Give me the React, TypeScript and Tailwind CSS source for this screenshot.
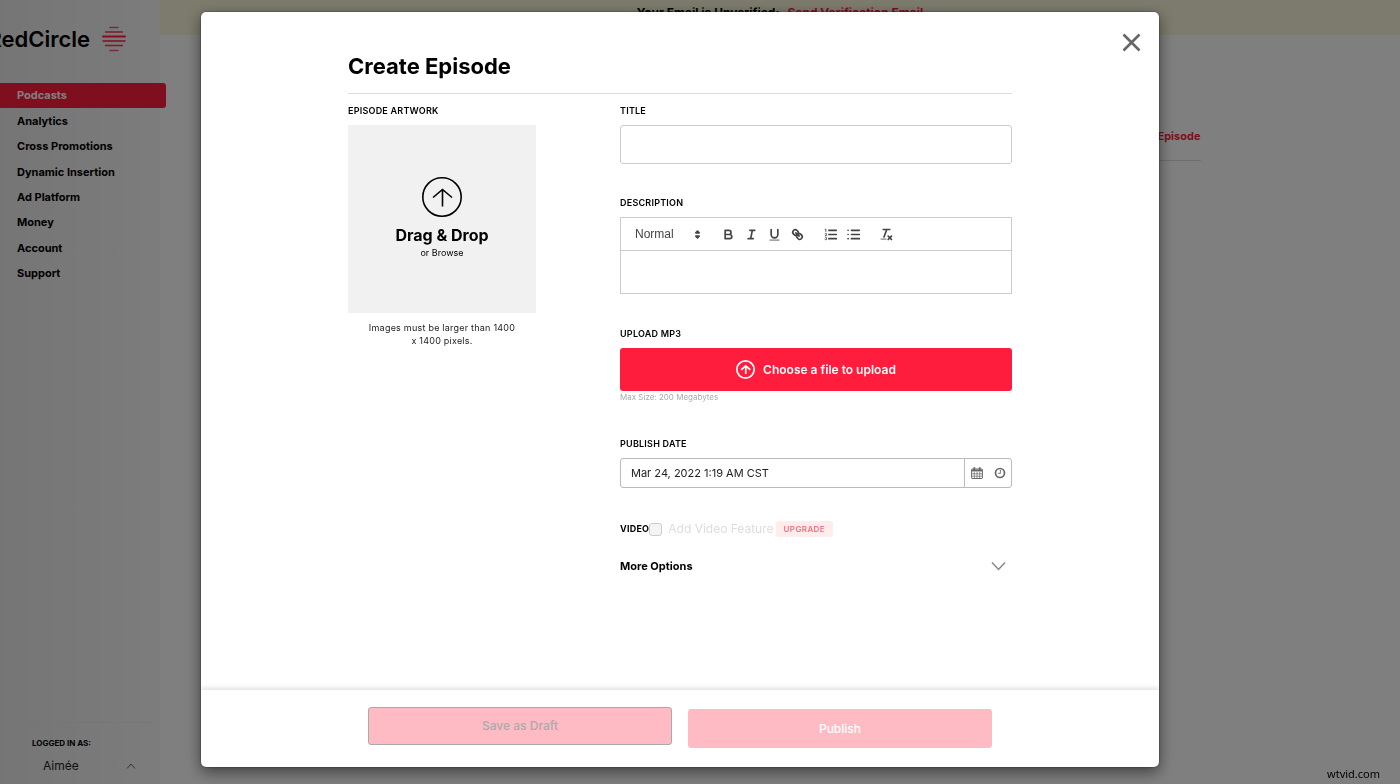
import React from "react";

const NAV_ITEMS = [
  "Podcasts",
  "Analytics",
  "Cross Promotions",
  "Dynamic Insertion",
  "Ad Platform",
  "Money",
  "Account",
  "Support",
];

function LogoMark() {
  return (
    <svg
      className="h-[26px] w-[26px] shrink-0"
      viewBox="0 0 26 26"
      fill="none"
      stroke="#fe1d3d"
      strokeLinecap="round"
    >
      <path d="M9 1.500h8M9 24.500h8" strokeWidth="1.600" opacity="0.750" />
      <path d="M4.500 6h17M4.500 19.500h17" strokeWidth="1.300" opacity="0.900" />
      <path d="M2 10.500h22" strokeWidth="2" />
      <path d="M2 15h22" strokeWidth="1.300" />
    </svg>
  );
}

function UploadCircle({ className, strokeWidth }: { className: string; strokeWidth: number }) {
  return (
    <svg className={className} viewBox="0 0 40 40" fill="none" stroke="currentColor" strokeWidth={strokeWidth}>
      <circle cx="20" cy="20" r={20 - strokeWidth / 2} />
      <path d="M20.500 29.500V12.500M11 20.500l9.500-8 9.500 8" />
    </svg>
  );
}

function ToolIcon({ label, children }: { label: string; children: React.ReactNode }) {
  return (
    <button type="button" aria-label={label} className="flex h-5 w-[23px] items-center justify-center text-[#444]">
      <svg
        className="h-[15px] w-[15px]"
        viewBox="0 0 18 18"
        fill="none"
        stroke="currentColor"
        strokeWidth="2"
        strokeLinecap="round"
        strokeLinejoin="round"
      >
        {children}
      </svg>
    </button>
  );
}

function Sidebar() {
  return (
    <aside className="flex w-40 shrink-0 flex-col bg-linear-to-r from-[#ebebeb] to-[#f9f9f9]">
      <div className="flex h-[83px] items-start justify-end gap-[11px] pt-[26px] pr-[33px]">
        <span className="text-[22px] leading-[26px] font-semibold">RedCircle</span>
        <LogoMark />
      </div>
      <nav className="-mr-1.5 grid h-[203px] auto-rows-fr">
        {NAV_ITEMS.map((item, i) => (
          <a
            key={item}
            href="#"
            className={
              i === 0
                ? "flex items-center rounded-r-[3px] bg-[#fe1d3d] pl-[17px] text-[11px] font-bold text-white"
                : "flex items-center pl-[17px] text-[11px] font-bold"
            }
          >
            {item}
          </a>
        ))}
      </nav>
      <div className="mt-auto px-2">
        <hr className="border-[#ececec]" />
        <div className="pt-3.5 pb-[5px] pl-6">
          <p className="text-[8px] leading-3 font-bold">LOGGED IN AS:</p>
          <button type="button" className="mt-1 flex h-[26px] w-[104px] items-center justify-between pl-[11px] text-xs text-[#222]">
            Aimée
            <svg className="h-2 w-2.5" viewBox="0 0 10 8" fill="none" stroke="#555" strokeWidth="0.900">
              <path d="M1 6.500l4-4.500 4 4.500" />
            </svg>
          </button>
        </div>
      </div>
    </aside>
  );
}

function Dashboard() {
  return (
    <div className="flex min-h-screen bg-white">
      <Sidebar />
      <main className="flex-1">
        <div className="flex h-[35px] items-start justify-center gap-2 bg-[#f9f7da] pt-[5px] text-xs font-bold">
          <span>Your Email is Unverified:</span>
          <a href="#" className="text-[#fe1d3d]">
            Send Verification Email
          </a>
        </div>
        <div className="mx-auto flex max-w-[841px] justify-end border-b border-[#ddd] pt-[93px] pb-4">
          <a href="#" className="text-[11px] leading-4 font-bold text-[#fe1d3d]">
            Episode
          </a>
        </div>
      </main>
    </div>
  );
}

const LABEL = "mb-[7px] block text-[9px] leading-[14px] font-semibold tracking-wide text-black uppercase";

function Editor() {
  return (
    <div className="border border-[#ccc]">
      <div className="flex h-[33px] items-center border-b border-[#ccc] pl-3.5">
        <div className="mr-3 flex w-[70px] items-center">
          <select
            aria-label="Text style"
            className="h-4 min-w-0 flex-1 appearance-none bg-transparent font-['Liberation_Sans',sans-serif] text-xs leading-4 font-medium text-[#444]"
          >
            <option>Normal</option>
          </select>
          <svg
            className="pointer-events-none h-[15px] w-[15px]"
            viewBox="0 0 18 18"
            fill="#444"
            stroke="#444"
            strokeWidth="2"
            strokeLinejoin="round"
          >
            <path d="M7 11l2 2 2-2zM7 7l2-2 2 2z" />
          </svg>
        </div>
        <div className="flex">
          <ToolIcon label="Bold">
            <path d="M5 4h4.500a2.500 2.500 0 0 1 0 5H5zM5 9h5.500a2.500 2.500 0 0 1 0 5H5z" />
          </ToolIcon>
          <ToolIcon label="Italic">
            <path d="M7 4h6M5 14h6M8 14l2-10" />
          </ToolIcon>
          <ToolIcon label="Underline">
            <path d="M5 3v6a4 4 0 0 0 8 0V3" />
            <path d="M3.500 15.700h11" strokeWidth="1" />
          </ToolIcon>
          <ToolIcon label="Link">
            <path d="M7 7l4 4" />
            <path d="M8.900 4.577a3.476 3.476 0 0 1 .36 4.679A3.476 3.476 0 0 1 4.577 8.900C3.185 7.500 2.035 6.400 4.217 4.217S7.500 3.185 8.900 4.577Z" />
            <path d="M13.423 9.100a3.476 3.476 0 0 0-4.679-.36 3.476 3.476 0 0 0 .36 4.679c1.392 1.392 2.500 2.542 4.679.36S14.815 10.500 13.423 9.100Z" />
          </ToolIcon>
        </div>
        <div className="ml-2.5 flex">
          <ToolIcon label="Numbered list">
            <path d="M7 4h9M7 9h9M7 14h9" />
            <path
              d="M2.500 2.900l1-.4v3M4.500 10.500h-2c0-.234 1.850-1.076 1.850-2.234a.959.959 0 0 0-1.850-.11M2.500 14.846a.959.959 0 0 0 1.850-.109.7.7 0 0 0-.6-.737.688.688 0 0 0 .6-.736.959.959 0 0 0-1.850-.109"
              strokeWidth="1"
            />
          </ToolIcon>
          <ToolIcon label="Bulleted list">
            <path d="M6.500 4h9.500M6.500 9h9.500M6.500 14h9.500" />
            <path d="M2.500 4h.01M2.500 9h.01M2.500 14h.01" />
          </ToolIcon>
        </div>
        <div className="ml-2.5 flex">
          <ToolIcon label="Clear formatting">
            <path d="M5 3h8M6 12l3.350-9M11 11l4 4M15 11l-4 4" />
            <path d="M2.500 14.500h6" strokeWidth="1" />
          </ToolIcon>
        </div>
      </div>
      <textarea id="description" className="block h-[42px] w-full resize-none px-3 py-2 text-xs outline-none" />
    </div>
  );
}

function CalendarIcon() {
  return (
    <svg className="h-3 w-3" viewBox="0 0 12 12" fill="none" stroke="#666">
      <rect x="0.600" y="2" width="10.800" height="9.500" rx="0.600" />
      <path d="M0.600 3.500h10.800" strokeWidth="1.800" />
      <path d="M3.300 0.300v3M8.700 0.300v3" strokeWidth="1.800" />
      <path d="M3.300 4.500v7M6 4.500v7M8.700 4.500v7M0.600 6.800h10.800M0.600 9.200h10.800" strokeWidth="0.700" />
    </svg>
  );
}

function ClockIcon() {
  return (
    <svg className="h-3 w-3" viewBox="0 0 12 12" fill="none" stroke="#666">
      <circle cx="6" cy="6" r="4.500" strokeWidth="1.700" />
      <path d="M6.400 3v3.300H4.200" strokeWidth="0.900" />
    </svg>
  );
}

function EpisodeForm() {
  return (
    <div className="flex items-start justify-between pt-2.5">
      <section className="w-[188px]">
        <h2 className={LABEL}>Episode Artwork</h2>
        <button type="button" className="flex aspect-square w-full flex-col items-center justify-center bg-[#f1f1f1]">
          <UploadCircle className="h-10 w-10" strokeWidth={1.6} />
          <span className="mt-2 text-base leading-5 font-bold">Drag &amp; Drop</span>
          <span className="text-[9px] leading-4">or Browse</span>
        </button>
        <p className="mt-2 px-5 text-center text-[9px] leading-[13px] tracking-wide text-[#222]">
          Images must be larger than 1400 x 1400 pixels.
        </p>
      </section>

      <section className="flex w-[392px] flex-col">
        <div className="mb-8">
          <label htmlFor="title" className={LABEL}>
            Title
          </label>
          <input
            id="title"
            type="text"
            className="block h-[39px] w-full rounded-[3px] border border-[#ccc] px-3 text-xs outline-none"
          />
        </div>

        <div className="mb-[33px]">
          <label htmlFor="description" className={LABEL}>
            Description
          </label>
          <Editor />
        </div>

        <div className="mb-[33px]">
          <h2 className={LABEL}>Upload MP3</h2>
          <button
            type="button"
            className="flex h-[43px] w-full items-center justify-center gap-2 rounded-[3px] bg-[#fe1d3d] text-xs font-semibold text-white"
          >
            <UploadCircle className="h-[19px] w-[19px]" strokeWidth={3.6} />
            Choose a file to upload
          </button>
          <p className="text-[8px] leading-[13px] text-[#aaa]">Max Size: 200 Megabytes</p>
        </div>

        <div>
          <label htmlFor="publish-date" className={LABEL}>
            Publish Date
          </label>
          <div className="flex h-[30px] rounded-[3px] border border-[#bbb]">
            <input
              id="publish-date"
              type="text"
              defaultValue="Mar 24, 2022 1:19 AM CST"
              className="min-w-0 flex-1 px-2.5 text-[11px] text-[#222] outline-none"
            />
            <div className="flex border-l border-[#bbb]">
              <button type="button" aria-label="Select date" className="flex w-[23px] items-center justify-center">
                <CalendarIcon />
              </button>
              <button type="button" aria-label="Select time" className="flex w-[23px] items-center justify-center">
                <ClockIcon />
              </button>
            </div>
          </div>
        </div>

        <div className="mt-8 flex h-[18px] items-center">
          <span className="text-[9px] font-bold tracking-wide">VIDEO</span>
          <input
            id="video"
            type="checkbox"
            disabled
            className="h-[13px] w-[13px] appearance-none rounded-[3px] border border-[#ccc] bg-[#f4f4f4]"
          />
          <label htmlFor="video" className="ml-1.5 text-xs text-[#ddd]">
            Add Video Feature
          </label>
          <a
            href="#"
            className="ml-0.5 flex h-4 items-center rounded-[3px] bg-[#ffeced] px-2 text-[8px] font-semibold tracking-wider text-[#f4717f]"
          >
            UPGRADE
          </a>
        </div>

        <button type="button" className="mt-[18px] flex h-5 items-center justify-between pr-1.5 text-[11px] font-bold">
          More Options
          <svg className="h-2.5 w-[15px]" viewBox="0 0 15 10" fill="none" stroke="#888" strokeWidth="1.500">
            <path d="M1 1.500l6.500 7 6.500-7" />
          </svg>
        </button>
      </section>
    </div>
  );
}

function CreateEpisodeDialog() {
  return (
    <div className="fixed inset-0 flex justify-center bg-black/50 pt-3 pr-10 pb-[17px]">
      <div
        role="dialog"
        aria-modal="true"
        aria-labelledby="dialog-title"
        className="relative flex w-full max-w-[958px] flex-col overflow-hidden rounded-[5px] bg-white shadow-[0_5px_15px_rgba(0,0,0,0.5),0_0_2px_rgba(0,0,0,0.6)]"
      >
        <button type="button" aria-label="Close" className="absolute top-[21px] right-[18px]">
          <svg className="h-[19px] w-[19px]" viewBox="0 0 19 19" fill="none" stroke="#666" strokeWidth="2.600">
            <path d="M1.500 1.500l16 16M17.500 1.500l-16 16" />
          </svg>
        </button>

        <div className="flex-1 overflow-auto">
          <div className="mx-auto max-w-[664px] pt-10">
            <h1
              id="dialog-title"
              className="border-b border-[#ddd] pb-3 text-[22px] leading-[29px] font-bold text-black"
            >
              Create Episode
            </h1>
            <EpisodeForm />
          </div>
        </div>

        <footer className="px-4 pt-[17px] pb-[19px] shadow-[0_-1px_6px_rgba(0,0,0,0.16)]">
          <div className="mx-auto grid h-[41px] max-w-[624px] grid-cols-2 gap-4">
            <button
              type="button"
              disabled
              className="h-[38px] self-start rounded-[3px] border border-[#aaa] bg-[#ffbbc3] text-xs font-medium text-[#aaa]"
            >
              Save as Draft
            </button>
            <button
              type="button"
              disabled
              className="h-[39px] self-end rounded-[3px] bg-[#ffbbc3] text-xs font-medium text-white"
            >
              Publish
            </button>
          </div>
        </footer>
      </div>
      <span className="absolute right-5 bottom-0.5 font-['Noto_Sans',sans-serif] text-[11px] leading-4 text-black">
        wtvid.com
      </span>
    </div>
  );
}

export default function App() {
  return (
    <div className="overflow-x-hidden font-[Inter,sans-serif] text-black">
      <Dashboard />
      <CreateEpisodeDialog />
    </div>
  );
}
